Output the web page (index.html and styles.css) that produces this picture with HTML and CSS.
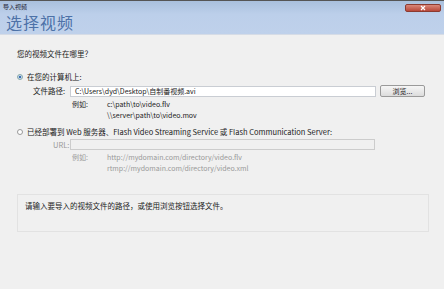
FILE: index.html
```html
<!DOCTYPE html>
<html><head><meta charset="utf-8"><link rel="stylesheet" href="styles.css"></head>
<body>
<div class="win">
  <div class="header">
    <div class="titlerow">
      <span class="wintitle">导入视频</span>
      <span class="close"><svg width="8" height="6" viewBox="0 0 8 6"><path d="M2 1L6 5M6 1L2 5" stroke="#fff" stroke-width="1.2"/></svg></span>
    </div>
    <div class="bigtitle">选择视频</div>
  </div>
  <div class="body">
    <div class="question">您的视频文件在哪里？</div>
    <div class="radiorow first"><span class="radio on"></span><span>在您的计算机上:</span></div>
    <div class="fieldrow">
      <span class="label">文件路径:</span>
      <div class="input">C:\Users\dyd\Desktop\自制番视频.avi</div>
      <div class="btn">浏览...</div>
    </div>
    <div class="example">
      <span class="exlabel">例如:</span>
      <div class="exlines"><div>c:\path\to\video.flv</div><div>\\server\path\to\video.mov</div></div>
    </div>
    <div class="radiorow second"><span class="radio"></span><span>已经部署到 Web 服务器、Flash Video Streaming Service 或 Flash Communication Server:</span></div>
    <div class="fieldrow url">
      <span class="label gray">URL:</span>
      <div class="input disabled"></div>
    </div>
    <div class="example gray">
      <span class="exlabel">例如:</span>
      <div class="exlines"><div>http://mydomain.com/directory/video.flv</div><div>rtmp://mydomain.com/directory/video.xml</div></div>
    </div>
    <div class="hint">请输入要导入的视频文件的路径，或使用浏览按钮选择文件。</div>
  </div>
</div>
</body></html>
```
FILE: styles.css
```css
html,body{margin:0;padding:0;}
body{width:444px;height:289px;overflow:hidden;background:#f0f0f0;font-family:"Noto Sans CJK SC","Liberation Sans",sans-serif;color:#222;}
.win{width:444px;height:289px;border-top:1px solid #555;box-sizing:border-box;}
.header{height:34px;background:linear-gradient(#a9c0dd,#bccfea 40%,#bfd1eb);border-bottom:1px solid #d6dce6;box-sizing:border-box;}
.titlerow{display:flex;justify-content:space-between;align-items:flex-start;height:12px;}
.wintitle{font-size:6px;line-height:8px;padding:2px 0 0 3px;color:#223;}
.close{display:flex;align-items:center;justify-content:center;width:36px;height:8px;margin:3px 3px 0 0;background:linear-gradient(#d9877a,#b9483a);border:1px solid #8c3a30;border-radius:2px;box-sizing:border-box;}
.bigtitle{font-size:16px;line-height:18px;padding-left:6px;color:#4d72a8;letter-spacing:1px;}
.body{padding:14px 0 0 17px;font-size:7.5px;line-height:10px;}
.question{height:10px;}
.radiorow{display:flex;align-items:center;gap:4px;}
.radiorow.first{margin-top:13px;}
.radiorow.second{margin-top:6px;}
.radio{width:6px;height:6px;border-radius:50%;border:1px solid #999;background:#fff;box-sizing:border-box;position:relative;}
.radio.on{background:radial-gradient(circle,#3a6fb5 45%,#c7d6ea 50%);border-color:#8aa;}
.fieldrow{display:flex;align-items:center;margin-top:3px;padding-left:16px;}
.label{width:37px;}
.gray{color:#999;}
.input{width:306px;height:11px;background:#fff;border:1px solid #c9cdd3;box-sizing:border-box;font-size:7px;line-height:9px;padding-left:4px;}
.input.disabled{background:#f0f0f0;border-color:#ccc;width:305px;}
.btn{margin-left:4px;width:45px;height:12px;border:1px solid #9a9a9a;border-radius:2px;background:linear-gradient(#f6f6f6,#dcdcdc);box-sizing:border-box;font-size:7px;line-height:10px;text-align:center;}
.fieldrow.url{margin-top:2px;padding-left:36px;}
.fieldrow.url .label{width:17px;}
.example{display:flex;padding-left:55px;margin-top:2px;font-size:7px;}
.exlabel{width:35px;}
.exlines div{line-height:11px;}
.hint{margin-top:20px;width:412px;height:38px;box-sizing:border-box;border:1px solid #e2e2e2;padding:6px 0 0 7px;}
```
